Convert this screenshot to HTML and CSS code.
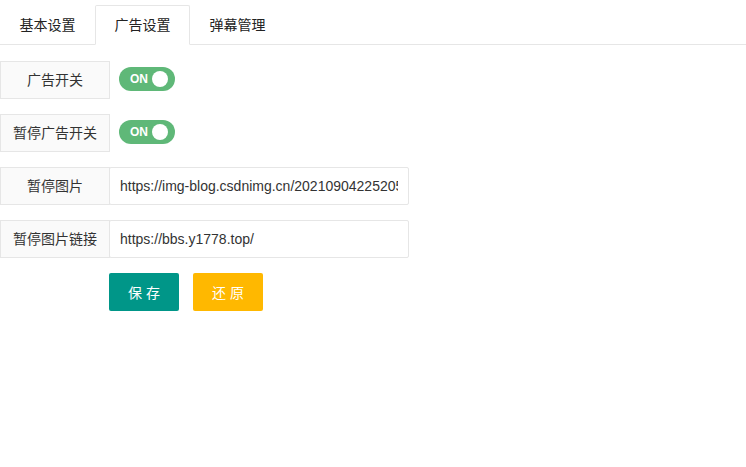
FILE: index.html
```html
<!DOCTYPE html>
<html lang="zh-CN">
<head>
<meta charset="utf-8">
<title>广告设置</title>
<link rel="stylesheet" href="styles.css">
</head>
<body>
<ul class="tabs">
  <li class="tab">基本设置</li>
  <li class="tab active">广告设置</li>
  <li class="tab">弹幕管理</li>
</ul>
<form class="form">
  <div class="row">
    <label class="label">广告开关</label>
    <div class="switch"><span class="switch-text">ON</span><span class="knob"></span></div>
  </div>
  <div class="row">
    <label class="label">暂停广告开关</label>
    <div class="switch"><span class="switch-text">ON</span><span class="knob"></span></div>
  </div>
  <div class="row">
    <label class="label">暂停图片</label>
    <input class="input" type="text" value="https://img-blog.csdnimg.cn/20210904225205947.png">
  </div>
  <div class="row">
    <label class="label">暂停图片链接</label>
    <input class="input" type="text" value="https://bbs.y1778.top/">
  </div>
  <div class="actions">
    <button type="button" class="btn btn-save">保 存</button>
    <button type="button" class="btn btn-reset">还 原</button>
  </div>
</form>
</body>
</html>
```
FILE: styles.css
```css
* { box-sizing: border-box; }
body {
  margin: 0;
  background: #fff;
  color: #333;
  font-family: "Liberation Sans", "Noto Sans CJK SC", sans-serif;
  font-size: 14px;
}
.tabs {
  list-style: none;
  margin: 5px 0 0;
  padding: 0;
  display: flex;
  height: 40px;
  border-bottom: 1px solid #e6e6e6;
}
.tab {
  width: 95px;
  height: 40px;
  line-height: 38px;
  text-align: center;
  color: #222;
  border: 1px solid transparent;
}
.tab.active {
  border-color: #e6e6e6;
  border-bottom-color: #fff;
  background: #fff;
  border-radius: 2px 2px 0 0;
}
.form {
  margin: 0;
  padding-top: 16px;
}
.row {
  display: flex;
  height: 38px;
  margin-bottom: 15px;
}
.label {
  width: 110px;
  height: 38px;
  line-height: 36px;
  text-align: center;
  border: 1px solid #e6e6e6;
  background: #fafafa;
  color: #333;
  flex: none;
}
.switch {
  margin: 6px 0 0 9px;
  width: 56px;
  height: 24px;
  border-radius: 12px;
  background: #5fb878;
  display: flex;
  align-items: center;
  justify-content: space-between;
  padding: 0 7px 0 11px;
}
.switch-text {
  color: #fff;
  font-size: 12px;
  font-weight: bold;
  font-family: "Liberation Sans", "Noto Sans CJK SC", sans-serif;
}
.knob {
  width: 16px;
  height: 16px;
  border-radius: 50%;
  background: #fff;
}
.input {
  margin: 0 0 0 -1px;
  width: 300px;
  height: 38px;
  border: 1px solid #e6e6e6;
  border-radius: 2px;
  padding: 0 10px;
  font-family: "Liberation Sans", "Noto Sans CJK SC", sans-serif;
  font-size: 14px;
  color: #333;
  background: #fff;
  outline: none;
}
.actions {
  display: flex;
  gap: 14px;
  margin-left: 109px;
}
.btn {
  width: 70px;
  height: 38px;
  border: none;
  border-radius: 2px;
  color: #fff;
  font-family: "Liberation Sans", "Noto Sans CJK SC", sans-serif;
  font-size: 14px;
  padding: 0;
}
.btn-save { background: #009688; }
.btn-reset { background: #ffb800; }
```
